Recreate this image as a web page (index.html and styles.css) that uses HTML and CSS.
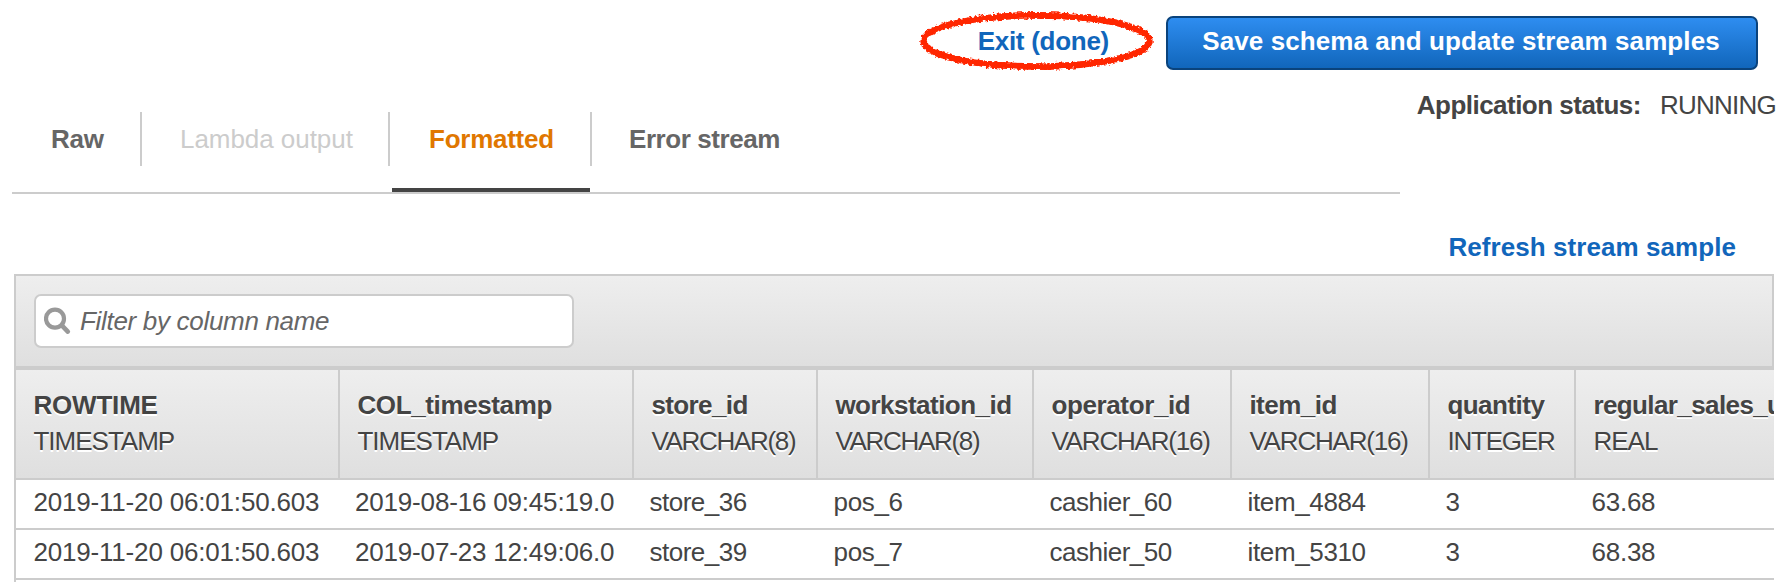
FILE: index.html
```html
<!DOCTYPE html>
<html lang="en">
<head>
<meta charset="utf-8">
<title>Stream samples</title>
<link rel="stylesheet" href="styles.css">
</head>
<body>
<header class="actions">
  <a class="exit">Exit (done)
    <svg class="scribble" width="248" height="72" viewBox="0 0 248 72" fill="none" stroke="#ff2600">
      <defs>
        <filter id="rough" x="-5%" y="-10%" width="110%" height="120%">
          <feTurbulence type="fractalNoise" baseFrequency="0.35" numOctaves="2" seed="4" result="n"/>
          <feDisplacementMap in="SourceGraphic" in2="n" scale="5" xChannelSelector="R" yChannelSelector="G"/>
        </filter>
      </defs>
      <g filter="url(#rough)">
        <ellipse cx="124.5" cy="36" rx="113" ry="25.6" stroke-width="6.4"/>
        <ellipse cx="124.5" cy="36" rx="115" ry="23" stroke-width="1.6" stroke-dasharray="60 9 35 14"/>
        <ellipse cx="124.5" cy="36" rx="111.5" ry="28" stroke-width="1.8" stroke-dasharray="42 12 70 8"/>
      </g>
    </svg>
  </a>
  <button class="save">Save schema and update stream samples</button>
</header>

<section class="subhead">
  <nav class="tabs">
    <a class="tab raw">Raw</a>
    <a class="tab lambda">Lambda output</a>
    <a class="tab formatted">Formatted</a>
    <a class="tab errors">Error stream</a>
  </nav>
  <div class="status"><b>Application status:</b><span>RUNNING</span></div>
</section>

<div class="refresh"><a>Refresh stream sample</a></div>

<main class="panel">
  <div class="filter">
    <label class="search">
      <svg width="28" height="30" viewBox="0 0 28 30" fill="none" stroke="#999">
        <circle cx="11" cy="12.7" r="9" stroke-width="4.2"/>
        <path d="M18 19.6l5.8 6" stroke-width="4.6" stroke-linecap="round"/>
      </svg>
      <span>Filter by column name</span>
    </label>
  </div>
  <table class="grid">
    <colgroup><col class="c1"><col class="c2"><col class="c3"><col class="c4"><col class="c5"><col class="c6"><col class="c7"><col class="c8"></colgroup>
    <thead>
      <tr>
        <th><b class="t2">ROWTIME</b><span class="t10">TIMESTAMP</span></th>
        <th><b class="t4">COL_timestamp</b><span class="t10">TIMESTAMP</span></th>
        <th><b class="t6">store_id</b><span class="t13">VARCHAR(8)</span></th>
        <th><b class="t5">workstation_id</b><span class="t13">VARCHAR(8)</span></th>
        <th><b class="t4">operator_id</b><span class="t12">VARCHAR(16)</span></th>
        <th><b class="t5">item_id</b><span class="t12">VARCHAR(16)</span></th>
        <th><b class="t5">quantity</b><span class="t11">INTEGER</span></th>
        <th><b class="t6">regular_sales_u</b><span class="t8">REAL</span></th>
      </tr>
    </thead>
    <tbody>
      <tr><td class="t2">2019-11-20 06:01:50.603</td><td class="t2">2019-08-16 09:45:19.0</td><td class="t5">store_36</td><td class="t4">pos_6</td><td class="t5">cashier_60</td><td class="t4">item_4884</td><td>3</td><td class="t3">63.68</td></tr>
      <tr><td class="t2">2019-11-20 06:01:50.603</td><td class="t2">2019-07-23 12:49:06.0</td><td class="t5">store_39</td><td class="t4">pos_7</td><td class="t5">cashier_50</td><td class="t4">item_5310</td><td>3</td><td class="t3">68.38</td></tr>
    </tbody>
  </table>
</main>
</body>
</html>
```
FILE: styles.css
```css
* { box-sizing: border-box; }
body {
  margin: 0;
  width: 1788px;
  height: 582px;
  overflow: hidden;
  background: #fff;
  color: #444;
  font: 26px/36px "Liberation Sans", Arial, sans-serif;
  white-space: nowrap;
}

/* Top actions */
.actions {
  display: flex;
  justify-content: flex-end;
  gap: 57px;
  padding: 16px 30px 0 0;
  height: 70px;
}
.exit {
  position: relative;
  height: 54px;
  padding-top: 7px;
  color: #1166bb;
  font-weight: bold;
  letter-spacing: -.27px;
}
.scribble {
  position: absolute;
  left: -66px;
  top: -11px;
}
.save {
  width: 592px;
  height: 54px;
  padding: 0 2px 4px 0;
  border: 2px solid #0a437c;
  border-radius: 7px;
  background: linear-gradient(#2e8df0, #1166bb);
  color: #fff;
  font: bold 26px/36px "Liberation Sans", Arial, sans-serif;
  letter-spacing: .08px;
}

/* Tabs and status */
.subhead {
  display: flex;
  justify-content: space-between;
  height: 124px;
  padding: 0 12px 0 12px;
}
.tabs {
  display: flex;
  width: 1388px;
  padding-top: 42px;
  border-bottom: 2px solid #ccc;
}
.tab {
  height: 54px;
  border-right: 2px solid #ccc;
  color: #666;
  font-weight: bold;
  line-height: 54px;
}
.raw { width: 130px; padding-left: 39px; letter-spacing: -.3px; }
.lambda {
  width: 248px;
  padding-left: 38px;
  color: #ccc;
  font-weight: normal;
  letter-spacing: -.05px;
}
.formatted {
  width: 202px;
  padding-left: 39px;
  color: #e07700;
  letter-spacing: -.25px;
}
.formatted::after {
  content: "";
  display: block;
  width: 198px;
  height: 4px;
  margin: 22px 0 0 -37px;
  background: #444;
}
.errors { border-right: 0; padding-left: 37px; letter-spacing: -.42px; }
.status {
  display: flex;
  gap: 19px;
  padding-top: 17px;
}
.status b { letter-spacing: -.52px; }
.status span { letter-spacing: -.75px; }

.refresh {
  height: 80px;
  padding: 35px 52px 0 0;
  text-align: right;
  color: #1166bb;
  font-weight: bold;
  letter-spacing: .07px;
}

/* Sample panel */
.panel {
  width: 1760px;
  height: 308px;
  margin-left: 14px;
  border-left: 2px solid #ccc;
  overflow: hidden;
}
.filter {
  height: 94px;
  padding: 18px;
  border-top: 2px solid #ccc;
  border-right: 2px solid #ccc;
  border-bottom: 2px solid #ccc;
  background: linear-gradient(#eee, #dfdfdf);
}
.search {
  display: flex;
  align-items: center;
  gap: 8px;
  width: 540px;
  height: 54px;
  padding-left: 8px;
  border: 2px solid #ccc;
  border-radius: 7px;
  background: #fff;
  color: #666;
  font-style: italic;
  letter-spacing: -.31px;
}
.grid {
  width: 1758px;
  table-layout: fixed;
  border-collapse: separate;
  border-spacing: 0;
}
.c1 { width: 324px; }
.c2 { width: 294px; }
.c3 { width: 184px; }
.c4 { width: 216px; }
.c5, .c6 { width: 198px; }
.c7 { width: 146px; }
.c8 { width: 198px; }
.grid th {
  height: 112px;
  padding: 17px 0 0 17.4px;
  border-top: 2px solid #ccc;
  border-right: 2px solid #ccc;
  border-bottom: 2px solid #ccc;
  background: linear-gradient(#eee, #dfdfdf);
  font-weight: normal;
  text-align: left;
  text-shadow: 0 2px 0 #fff;
  vertical-align: top;
}
.grid th:last-child { border-right: 0; overflow: hidden; }
.grid th b, .grid th span { display: block; }
.grid td {
  height: 50px;
  padding: 0 0 4px 15.6px;
  border-bottom: 2px solid #ccc;
  line-height: 34px;
}
.grid td:nth-child(2) { padding-left: 15px; }
.grid td:first-child { padding-left: 17.4px; }

/* Tracking steps */
.t2 { letter-spacing: -.18px; }
.t3 { letter-spacing: -.28px; }
.t4 { letter-spacing: -.37px; }
.t5 { letter-spacing: -.52px; }
.t6 { letter-spacing: -.6px; }
.t8 { letter-spacing: -.95px; }
.t10 { letter-spacing: -.99px; }
.t11 { letter-spacing: -1.2px; }
.t12 { letter-spacing: -1.18px; }
.t13 { letter-spacing: -1.31px; }
```
